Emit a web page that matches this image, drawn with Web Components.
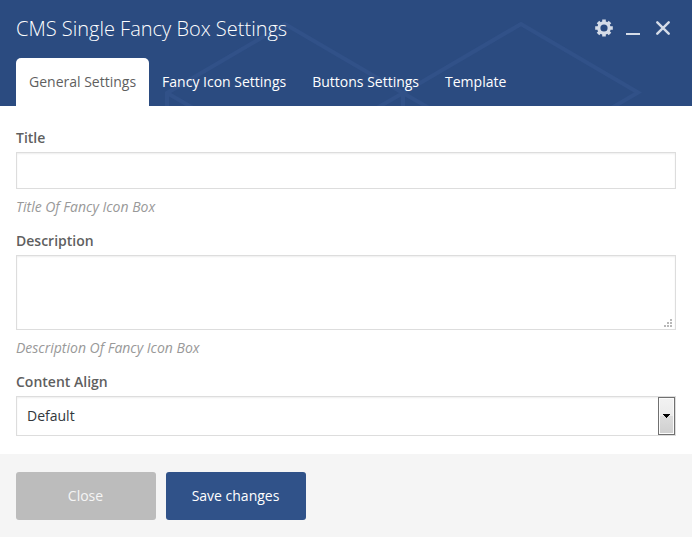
<!DOCTYPE html>
<html lang="en">
<head>
<meta charset="utf-8">
<title>CMS Single Fancy Box Settings</title>
<style>
html,body{margin:0;height:100%;background:#fff;overflow:hidden}
body{font:14px/20px "Open Sans",sans-serif;color:#5a5a5a}
</style>
</head>
<body>
<settings-panel></settings-panel>
<script>
const define = (name, html) => customElements.define(name, class extends HTMLElement {
  constructor() {
    super();
    const t = document.createElement('template');
    t.innerHTML = html;
    this.attachShadow({mode: 'open'}).append(t.content.cloneNode(true));
  }
});

define('panel-tab', `<style>
:host{display:block;box-sizing:border-box;height:48px;padding:14px 13px;color:#fff;border-radius:5px 5px 0 0;white-space:nowrap}
:host([active]){background:#fff;color:#5f5f5f}
</style><slot></slot>`);

define('panel-controls', `<style>
:host{display:flex;align-items:flex-start}
svg{display:block;fill:none;stroke:#d5dce8}
.gear{margin-top:1px}
.min{margin:15px 0 0 13px}
.close{margin:3px 0 0 16px}
</style>
<svg class="gear" width="18" height="18" viewBox="0 0 18 18"><circle cx="9" cy="9" r="5.2" stroke-width="3.2"/><g stroke-width="3.6"><path d="M9 .4v3M9 14.6v3M.2 9h3M14.8 9h3"/><path stroke-width="3.6" d="M3 3l2 2M13 13l2 2M15 3l-2 2M5 13l-2 2"/></g></svg>
<svg class="min" width="14" height="2"><path stroke-width="2" d="M0 1h14"/></svg>
<svg class="close" width="14" height="14"><path stroke-width="2.4" stroke-linecap="round" d="M1.3 1.3l11.4 11.4M12.7 1.3L1.3 12.7"/></svg>`);

define('panel-header', `<style>
:host{display:grid;grid-template-rows:58px 48px;height:106px;background:#2b4b80;position:relative;overflow:hidden}
.pattern{position:absolute;inset:0;fill:none;stroke:#315188;stroke-width:4}
.top,.tabs{display:flex;padding:0 16px;position:relative}
.top{justify-content:space-between;padding-right:22px}
h1{margin:15px 0 0;font:300 20px/27px "Open Sans",sans-serif;color:#fff;white-space:nowrap}
panel-controls{margin-top:18px}
</style>
<svg class="pattern" width="692" height="106"><path d="M167 140V93L285 24L403 93V140M403 93L521 24L638 92.5L521 161L403 93L285 161L167 93"/></svg>
<div class="top"><h1><slot name="title"></slot></h1><panel-controls></panel-controls></div>
<div class="tabs"><slot></slot></div>`);

define('form-field', `<style>
:host{display:block}
.label{display:block;font-weight:600;color:#5f5f5f;height:24px;line-height:20px}
.hint{font-style:italic;color:#999;margin-top:8px;height:20px}
</style><span class="label"><slot name="label"></slot></span><slot></slot><div class="hint"><slot name="hint"></slot></div>`);

define('text-box', `<style>
:host{display:flex;justify-content:flex-end;align-items:flex-end;box-sizing:border-box;height:37px;border:1px solid #ddd;background:#fff;box-shadow:inset 0 1px 2px rgba(0,0,0,.07)}
:host([multiline]){height:75px}
svg{display:none;margin:0 3px 2px 0}
:host([multiline]) svg{display:block}
</style><svg width="8" height="8" fill="#b8b8b8"><path d="M6 0h2v2h-2zM3 3h2v2h-2zM6 3h2v2h-2zM0 6h2v2h-2zM3 6h2v2h-2zM6 6h2v2h-2z"/></svg>`);

define('select-box', `<style>
:host{display:flex;justify-content:space-between;box-sizing:border-box;height:40px;border:1px solid #ddd;background:#fff;box-shadow:inset 0 1px 2px rgba(0,0,0,.07);color:#32373c}
.value{padding:9px 10px}
.arrow{box-sizing:border-box;width:17px;height:38px;border:1px solid #707070;box-shadow:inset 0 0 0 1px #fbfbfb;background:linear-gradient(#f2f2f2,#ebebeb 49%,#dcdcdc 50%,#cfcfcf);display:grid;place-items:center}
</style><span class="value"><slot></slot></span><span class="arrow"><svg width="7" height="4" shape-rendering="crispEdges"><path d="M0 0h7v1h-1v1h-1v1h-1v1h-1v-1h-1v-1h-1v-1h-1z"/></svg></span>`);

define('panel-button', `<style>
:host{display:grid;place-items:center;box-sizing:border-box;width:140px;height:48px;padding-right:1px;border-radius:3px;background:#bcbcbc;color:#f5f5f5}
:host([primary]){background:#305289;color:#fff}
</style><span><slot></slot></span>`);

define('settings-panel', `<style>
:host{display:grid;grid-template-rows:106px 348px 83px;height:537px}
main{padding:22px 16px 0}
form-field{height:103px}
form-field.tall{height:141px}
footer{display:flex;gap:10px;padding:18px 16px;background:#f5f5f5}
</style>
<panel-header><span slot="title">CMS Single Fancy Box Settings</span>
<panel-tab active>General Settings</panel-tab><panel-tab>Fancy Icon Settings</panel-tab><panel-tab>Buttons Settings</panel-tab><panel-tab>Template</panel-tab></panel-header>
<main>
<form-field><span slot="label">Title</span><text-box></text-box><span slot="hint">Title Of Fancy Icon Box</span></form-field>
<form-field class="tall"><span slot="label">Description</span><text-box multiline></text-box><span slot="hint">Description Of Fancy Icon Box</span></form-field>
<form-field><span slot="label">Content Align</span><select-box>Default</select-box></form-field>
</main>
<footer><panel-button>Close</panel-button><panel-button primary>Save changes</panel-button></footer>`);
</script>
</body>
</html>
